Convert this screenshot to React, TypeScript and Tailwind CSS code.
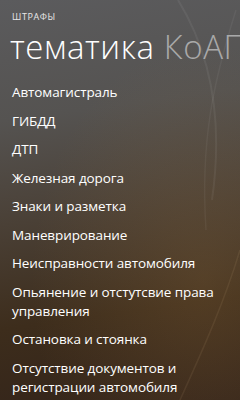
const topics = [
  "Автомагистраль",
  "ГИБДД",
  "ДТП",
  "Железная дорога",
  "Знаки и разметка",
  "Маневрирование",
  "Неисправности автомобиля",
  "Опьянение и отстутсвие права управления",
  "Остановка и стоянка",
  "Отсутствие документов и регистрации автомобиля",
];

export default function App() {
  return (
    <div
      className="relative h-[400px] w-[240px] overflow-hidden bg-[linear-gradient(172deg,#5b5b5d_0%,#555351_28%,#4a4036_52%,#3d2d1c_76%,#33241a_100%)] text-white"
      style={{ fontFamily: '"Open Sans", "Noto Sans", sans-serif' }}
    >
      {/* decorative background curves and glow */}
      <div className="pointer-events-none absolute inset-0 bg-[radial-gradient(ellipse_at_85%_70%,rgba(150,110,60,0.25),transparent_60%)]" />
      <svg
        className="pointer-events-none absolute inset-0"
        width="240"
        height="400"
        viewBox="0 0 240 400"
        fill="none"
      >
        <path d="M178 0 C215 60 222 130 212 200" stroke="rgba(255,255,255,0.06)" strokeWidth="2" />
        <path d="M236 10 C214 80 200 140 206 230" stroke="rgba(255,255,255,0.05)" strokeWidth="1.5" />
        <path d="M240 250 C225 300 205 345 180 400" stroke="rgba(255,220,170,0.08)" strokeWidth="1.5" />
      </svg>

      <div className="relative pl-3 pt-[12px]">
        <p className="text-[9px] uppercase leading-[10px] tracking-[0.6px] text-[#e8e8e8]">
          Штрафы
        </p>
        <h1 className="mt-[8px] -ml-[2px] whitespace-nowrap text-[33px] font-light leading-[34px] tracking-[0.6px]">
          тематика <span className="text-[#a9a9a9]">КоАП</span>
        </h1>

        <ul className="mt-[19px] flex flex-col gap-[9.5px] pr-1">
          {topics.map((t) => (
            <li key={t} className="text-[13.5px] leading-[19px] tracking-[-0.1px] text-white">
              {t}
            </li>
          ))}
        </ul>
      </div>
    </div>
  );
}
